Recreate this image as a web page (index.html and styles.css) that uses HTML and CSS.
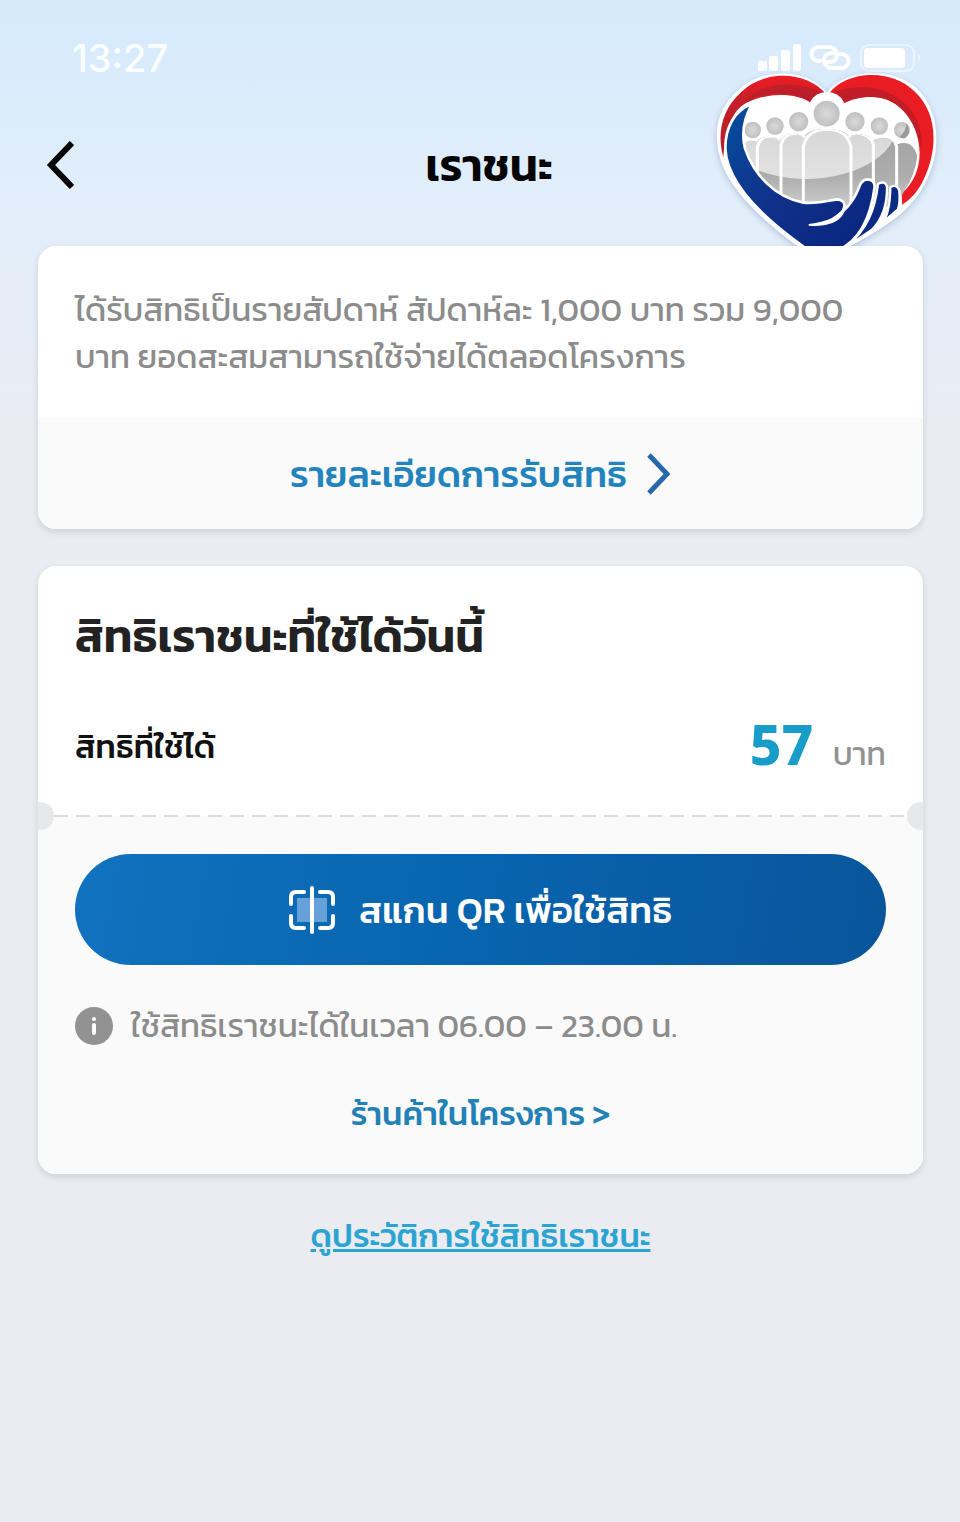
FILE: index.html
```
<!DOCTYPE html>
<html lang="th">
<head>
    <meta charset="UTF-8">
    <meta name="viewport" content="width=device-width, initial-scale=1.0">
    <title>เราชนะ</title>
    <link rel="stylesheet" href="styles.css">
</head>
<body>
    <div class="status-bar">
        <span class="clock">13:27</span>
        <svg class="status-icons" viewBox="0 0 168 32" fill="none" stroke="#fff">
            <g fill="#fff" stroke="none">
                <rect x="2" y="19" width="9" height="10" rx="2"/>
                <rect x="13" y="14" width="9" height="15" rx="2"/>
                <rect x="25" y="8" width="9" height="21" rx="2"/>
                <rect x="37" y="2" width="8" height="27" rx="2"/>
                <rect x="108" y="6" width="41" height="20" rx="4"/>
                <path d="M162 12q5 4 0 8z" opacity=".5"/>
            </g>
            <path d="M64 19h-2a7 7 0 0 1 1-14h11a8 8 0 0 1 5 13q-2 2-7 2M84 12h2a7 7 0 0 1-1 14H75a8 8 0 0 1-5-13q2-2 7-2" stroke-width="4" stroke-linecap="round"/>
            <rect x="105" y="3" width="53" height="26" rx="8" stroke-width="2" opacity=".5"/>
        </svg>
    </div>

    <header class="header">
        <button class="back" aria-label="กลับ">
            <svg viewBox="0 0 28 48" fill="none" stroke="#050505" stroke-width="6"><path d="M26 2L5 24l21 22"/></svg>
        </button>
        <h1>เราชนะ</h1>
        <svg class="logo" viewBox="45 120 675 540">
            <defs>
                <linearGradient id="red" x1="0" y1="0" x2="0" y2="1">
                    <stop offset="0" stop-color="#ef1c23"/>
                    <stop offset=".3" stop-color="#c5202a"/>
                    <stop offset="1" stop-color="#b51d2b"/>
                </linearGradient>
                <linearGradient id="blue" x1="0" y1="0" x2="1" y2="1">
                    <stop offset="0" stop-color="#064f9e"/>
                    <stop offset=".5" stop-color="#10308a"/>
                    <stop offset="1" stop-color="#08257e"/>
                </linearGradient>
                <linearGradient id="grey" x1="0" y1="0" x2="0" y2="1">
                    <stop offset="0" stop-color="#d6d6d6"/>
                    <stop offset="1" stop-color="#e2e2e2"/>
                </linearGradient>
                <linearGradient id="shade" x1="0" y1="0" x2="0" y2="1">
                    <stop offset="0" stop-color="#a0a0a0"/>
                    <stop offset=".6" stop-color="#adadad"/>
                    <stop offset="1" stop-color="#d0d0d0"/>
                </linearGradient>
                <radialGradient id="head">
                    <stop offset="0" stop-color="#dadada"/>
                    <stop offset="1" stop-color="#c0c0c0"/>
                </radialGradient>
                <clipPath id="people">
                    <path d="M130 345q22-20 40-8q10-18 38-16q20 0 34 8q12-18 42-18l26 8q20-22 70-22t68 22l24-6q32 0 46 18l30-8q32 2 44 20q46-16 60 36q-8 60-40 105L590 530H300C220 500 150 440 130 345z"/>
                </clipPath>
            </defs>
            <path fill="#fff" d="M380 188C330 118 190 108 115 180C50 235 38 310 62 390C90 480 190 575 308 660H430C560 590 640 540 680 450C725 360 720 240 650 175C575 108 430 118 380 188z"/>
            <path fill="url(#red)" d="M378 193C325 125 195 115 123 187C65 240 50 310 70 382C75 310 92 235 150 214C205 188 290 188 332 218C342 204 360 197 378 193z"/>
            <path fill="#a91f2a" opacity=".55" d="M372 192C300 150 190 150 130 218C200 175 290 186 332 218C342 204 360 197 372 192z"/>
            <path fill="#e91c24" d="M386 193C430 125 570 110 643 184C710 245 717 350 672 446C655 484 630 510 606 524V490C640 460 659 418 659 367C656 285 610 225 555 207C508 195 465 203 431 220C423 205 404 197 386 193z"/>
            <path fill="#aa1f2a" opacity=".65" d="M388 191C460 160 560 162 620 225C655 262 670 310 664 365C655 285 610 225 555 207C508 195 465 203 431 220C423 205 404 197 388 191z"/>
            <g clip-path="url(#people)">
                <path fill="url(#shade)" d="M120 290H670V540H120z"/>
                <path fill="url(#grey)" d="M120 290H590C580 400 420 450 310 447C240 445 180 430 120 395z"/>
                <g fill="none" stroke="#fff" stroke-width="9">
                    <path d="M172 430V352q8-32 36-34q24 0 34 12"/>
                    <path d="M243 490V344q10-32 42-34q20 0 30 12"/>
                    <path d="M310 520V350q12-52 71-52t72 52V520"/>
                    <path d="M446 322q8-12 24-12q40 0 50 34V460"/>
                    <path d="M518 326q8-10 24-10q38 0 48 34V470"/>
                </g>
            </g>
            <path fill="none" stroke="#fff" stroke-width="12" d="M335 220a52 52 0 0 1 92 0"/>
            <g fill="url(#head)">
                <circle cx="158" cy="300" r="25"/>
                <circle cx="225" cy="288" r="26"/>
                <circle cx="296" cy="275" r="29"/>
                <circle cx="380" cy="251" r="39"/>
                <circle cx="465" cy="275" r="29"/>
                <circle cx="538" cy="288" r="26"/>
                <circle cx="606" cy="300" r="24"/>
            </g>
            <path fill="#999" d="M620 280q16 28-4 44q-8 3-18-2q20-18 22-42z"/>
            <path fill="url(#blue)" stroke="#fff" stroke-width="8" d="M156 222C105 240 76 290 76 355C80 470 210 580 325 660H415C470 635 510 580 524 470Q524 448 502 448Q484 450 478 470C460 520 430 545 400 566C440 545 445 510 410 508C385 512 360 522 310 518C220 500 160 430 135 355C122 305 135 260 156 222z"/>
            <path fill="#fff" d="M326 582C385 576 425 556 436 522C440 548 420 594 326 587z"/>
            <path fill="#0a2a83" stroke="#fff" stroke-width="7" d="M534 462Q554 450 561 470C562 530 545 570 515 600L440 650C500 600 525 540 534 462z"/>
            <path fill="#0a2a83" stroke="#fff" stroke-width="7" d="M571 472Q590 460 598 482C600 505 600 520 594 538L552 574C568 540 570 510 571 472z"/>
        </svg>
    </header>

    <main>
        <section class="card">
            <p class="intro">ได้รับสิทธิเป็นรายสัปดาห์ สัปดาห์ละ 1,000 บาท รวม 9,000<br>บาท ยอดสะสมสามารถใช้จ่ายได้ตลอดโครงการ</p>
            <a class="detail" href="#">
                รายละเอียดการรับสิทธิ
                <svg viewBox="0 0 24 42" fill="none" stroke="#2868a8" stroke-width="5"><path d="M2 2l18 19L2 40"/></svg>
            </a>
        </section>

        <section class="card">
            <div class="balance">
                <h2>สิทธิเราชนะที่ใช้ได้วันนี้</h2>
                <div class="balance-row">
                    <span class="label">สิทธิที่ใช้ได้</span>
                    <span class="unit"><strong>57</strong> บาท</span>
                </div>
            </div>
            <div class="tear">
                <svg width="100%" height="2"><line x1="16" y1="1" x2="100%" y2="1" stroke="#dcdcdc" stroke-width="2" stroke-dasharray="14 8"/></svg>
            </div>
            <div class="actions">
                <button class="scan">
                    <svg viewBox="0 0 46 48" fill="none" stroke="#fff" stroke-width="4" stroke-linecap="round">
                        <path fill="#65a2da" stroke="none" d="M8 12h30v24H8z"/>
                        <path d="M2 18v-7q0-5 5-5h8M31 6h8q5 0 5 5v7M44 30v7q0 5-5 5h-8M15 42H7q-5 0-5-5v-7M23 2v44"/>
                    </svg>
                    สแกน QR เพื่อใช้สิทธิ
                </button>
                <p class="hours">
                    <svg viewBox="0 0 38 38"><circle cx="19" cy="19" r="19" fill="#929292"/><circle cx="19" cy="12" r="2" fill="#fff"/><path d="M19 18v8" stroke="#fff" stroke-width="4" stroke-linecap="round"/></svg>
                    ใช้สิทธิเราชนะได้ในเวลา 06.00 – 23.00 น.
                </p>
                <a class="shops" href="#">ร้านค้าในโครงการ &gt;</a>
            </div>
        </section>

        <a class="history" href="#">ดูประวัติการใช้สิทธิเราชนะ</a>
    </main>
</body>
</html>
```
FILE: styles.css
```
* {
    box-sizing: border-box;
}
body {
    margin: 0;
    min-height: 100vh;
    background: linear-gradient(#d5eafc 0, #e2eefb 200px, #ebecf1 460px, #ebecf1 100%);
    font-family: Kanit, Prompt, "Noto Sans Thai", "Noto Sans", sans-serif;
    color: #222;
}
h1, h2, p {
    margin: 0;
}
a {
    text-decoration: none;
}
button {
    border: 0;
    padding: 0;
    background: none;
    font-family: inherit;
}
.status-bar {
    display: flex;
    justify-content: space-between;
    align-items: center;
    height: 84px;
    padding: 32px 36px 0 72px;
    color: #fafeff;
}
.clock {
    font: 500 38px Inter, sans-serif;
}
.status-icons {
    width: 168px;
    height: 32px;
}
.header {
    position: relative;
    display: flex;
    align-items: center;
    height: 162px;
    padding: 0 46px;
}
.back svg {
    display: block;
    width: 28px;
    height: 48px;
}
.header h1 {
    flex: 1;
    padding-right: 10px;
    text-align: center;
    font-size: 45px;
    font-weight: 600;
    color: #050505;
}
.logo {
    position: absolute;
    right: 20px;
    bottom: -4px;
    width: 225px;
    height: 180px;
    filter: drop-shadow(0 2px 3px rgba(60, 90, 140, 0.3));
}
main {
    position: relative;
    padding: 0 37px 0 38px;
}
.card {
    margin-bottom: 37px;
    border-radius: 18px;
    background: #fff;
    box-shadow: 0 3px 6px rgba(50, 50, 80, 0.15);
}
.intro {
    padding: 40px 37px 38px;
    font-size: 33px;
    line-height: 47px;
    color: #8c8c8c;
}
.detail {
    display: flex;
    justify-content: center;
    align-items: center;
    gap: 20px;
    height: 111px;
    border-radius: 0 0 18px 18px;
    background: #fafafa;
    font-size: 37px;
    font-weight: 500;
    color: #2384bd;
}
.detail svg {
    width: 24px;
    height: 42px;
}
.balance {
    padding: 38px 37px 16px;
}
.balance h2 {
    font-size: 46px;
    line-height: 64px;
    font-weight: 600;
}
.balance-row {
    display: flex;
    justify-content: space-between;
    align-items: center;
    height: 80px;
    margin-top: 38px;
}
.label {
    font-size: 33px;
    font-weight: 500;
    color: #111;
}
.unit {
    padding-top: 8px;
    font-size: 32px;
    line-height: 80px;
    color: #929292;
}
.unit strong {
    margin-right: 12px;
    font: 800 55px "Noto Sans", sans-serif;
    color: #189dca;
}
.tear {
    position: relative;
    display: flex;
    align-items: center;
    height: 28px;
    overflow: hidden;
    background: linear-gradient(#fff 50%, #fafafa 50%);
}
.tear::before,
.tear::after {
    content: "";
    position: absolute;
    top: 0;
    left: -12px;
    width: 28px;
    height: 28px;
    border-radius: 50%;
    background: #e8e8ec;
}
.tear::after {
    left: auto;
    right: -12px;
}
.actions {
    display: flex;
    flex-direction: column;
    align-items: center;
    padding: 24px 37px 35px;
    border-radius: 0 0 18px 18px;
    background: #fafafa;
}
.scan {
    display: flex;
    justify-content: center;
    align-items: center;
    gap: 24px;
    width: 100%;
    height: 111px;
    border-radius: 56px;
    background: linear-gradient(100deg, #1172bf, #0864ae 50%, #09559b);
    font-size: 37px;
    font-weight: 500;
    color: #fff;
}
.scan svg {
    width: 46px;
    height: 48px;
}
.hours {
    display: flex;
    align-items: center;
    align-self: flex-start;
    gap: 18px;
    margin-top: 36px;
    font-size: 33px;
    line-height: 50px;
    color: #8c8c8c;
}
.hours svg {
    width: 38px;
    height: 38px;
}
.shops {
    margin-top: 38px;
    font-size: 33px;
    line-height: 50px;
    font-weight: 500;
    color: #2382b5;
}
.history {
    display: block;
    text-align: center;
    font-size: 33px;
    line-height: 50px;
    font-weight: 500;
    color: #2ba4d2;
    text-decoration: underline;
}
```
